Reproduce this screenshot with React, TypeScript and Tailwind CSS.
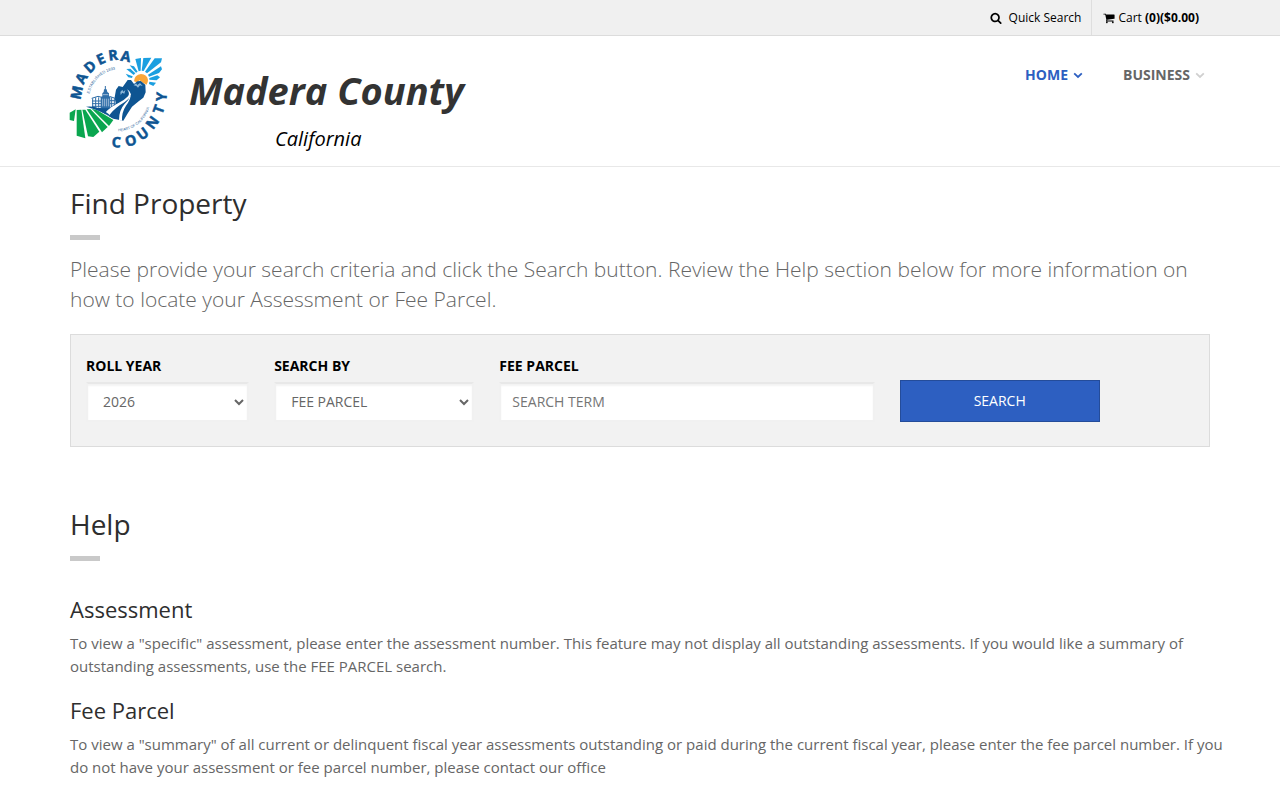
import React from "react";

type Letter = { char: string; x: number; y: number; angle: number };

const topLetters: Letter[] = [
  { char: "M", x: 50, y: 158, angle: -78 },
  { char: "A", x: 64, y: 115, angle: -60 },
  { char: "D", x: 90, y: 80, angle: -42 },
  { char: "E", x: 123, y: 57, angle: -24 },
  { char: "R", x: 159, y: 46, angle: -7 },
  { char: "A", x: 197, y: 49, angle: 10 },
];

const bottomLetters: Letter[] = [
  { char: "C", x: 169, y: 307, angle: 3 },
  { char: "O", x: 212, y: 302, angle: -17 },
  { char: "U", x: 248, y: 281, angle: -36 },
  { char: "N", x: 277, y: 248, angle: -54 },
  { char: "T", x: 296, y: 208, angle: -70 },
  { char: "Y", x: 305, y: 170, angle: -86 },
];

function CountySeal() {
  return (
    <svg viewBox="30 27 300 300" className="size-[100px] shrink-0 overflow-visible" role="img" aria-label="Madera County seal">
      <g
        fill="#0e5592"
        stroke="#0e5592"
        strokeWidth="1.5"
        fontFamily="'Open Sans', sans-serif"
        fontWeight="700"
        fontSize="43"
        textAnchor="middle"
      >
        {[...topLetters, ...bottomLetters].map((l) => (
          <text key={`${l.x}-${l.y}`} transform={`translate(${l.x} ${l.y}) rotate(${l.angle})`} y="15">
            {l.char}
          </text>
        ))}
      </g>
      <g fill="#1b9fe0">
        <path d="M199 87 L211 86 L226 100 L221 105Z" />
        <path d="M209 76 L222 79 L233 95 L228 98Z" />
        <path d="M226 57 L243 54 L242 92 L236 94Z" />
        <path d="M250 54 L274 53 L251 93 L245 92Z" />
        <path d="M284 55 L306 55 L303 67 L261 100 L255 95Z" />
        <path d="M303 79 L306 88 L297 99 L267 110 L264 104Z" />
        <path d="M292 106 L300 112 L290 121 L268 119 L268 114Z" />
        <path d="M268 125 L288 128 L280 138 L267 132Z" />
        <path d="M197 101 L218 109 L216 114 L205 112Z" />
      </g>
      <path d="M222 124 Q223 104 243 102 Q262 103 264 120 Q264 127 260 134 L248 128 L239 121 L230 127Z" fill="#f9a63a" />
      <path
        d="M164 172 L168 149 L176 138 L188 141 L203 120 L213 120 L222 132 L232 124 L242 123 L256 134 L257 157 L250 173 L236 184 L216 200 L202 222 L190 242 L160 236 L125 216 L108 204 L150 203 L167 190Z"
        fill="#0e5592"
      />
      <path
        d="M201 148 Q211 160 204 169 Q193 181 174 190 Q147 203 134 221 L146 229 Q157 212 179 196 Q212 177 213 163 Q211 153 201 148Z"
        fill="#fff"
      />
      <path d="M212 165 Q207 180 193 193 Q177 211 177 240 L186 242 Q185 216 198 197 Q211 181 212 165Z" fill="#fff" />
      <path
        d="M181 156 L187 149 L190 155 L196 150 L193 161 L187 158 L182 165Z M221 136 L228 130 L232 135 L240 129 L248 138 L240 136 L234 143 L229 138Z"
        fill="#8db7d8"
      />
      <g stroke="#2f6ea8" fill="none" strokeWidth="3">
        <path d="M95 175 L114 169 L126 172 M96 183 H126 M96 191 H126 M96 199 H126 M98 175 V202 M107 172 V203 M116 172 V203" />
        <path d="M148 169 L166 175 M148 182 H166 M148 191 H164 M155 172 V201 M163 174 V196" />
        <path d="M136 138 V150" />
      </g>
      <path d="M122 172 L127 169 V160 L131 156 L132 148 H140 L142 156 L147 160 V169 L151 172 V205 H122Z" fill="#2f6ea8" />
      <path d="M129 164 H145 M128 176 V199 M134 176 V199 M140 176 V199 M146 176 V199" stroke="#cfe0ee" strokeWidth="2" />
      <g fill="#0aa64f">
        <path d="M29 218 L47 208 L42 243 L29 240Z" />
        <path d="M50 210 L64 209 L76 295 L50 287Z" />
        <path d="M67 209 L76 209 L118 275 L100 291 L84 289Z" />
        <path d="M80 208 L91 207 L143 261 L126 277Z" />
        <path d="M95 206 L112 211 L160 240 L147 258Z" />
      </g>
      <path d="M78 200 Q105 196 130 211 Q148 222 160 236 Q128 215 98 206Z" fill="#0e5592" />
      <defs>
        <path id="seal-arc-top" d="M89 161 A91 91 0 0 1 180 88" />
        <path id="seal-arc-bottom" d="M175 274 A99 99 0 0 0 270 193" />
      </defs>
      <g fill="#2a659b" fontFamily="'Liberation Sans', sans-serif" fontSize="12">
        <text>
          <textPath href="#seal-arc-top">ESTABLISHED 1893</textPath>
        </text>
        <text fontSize="11">
          <textPath href="#seal-arc-bottom">HEART OF CALIFORNIA</textPath>
        </text>
      </g>
    </svg>
  );
}

function SearchIcon() {
  return (
    <svg viewBox="0 0 1792 1792" className="size-3" fill="currentColor" aria-hidden="true">
      <path d="M1216 832q0-185-131.5-316.5t-316.5-131.5-316.5 131.5-131.5 316.5 131.5 316.5 316.5 131.5 316.5-131.5 131.5-316.5zm512 832q0 52-38 90t-90 38q-54 0-90-38l-343-342q-179 124-399 124-143 0-273.5-55.5t-225-150-150-225-55.5-273.5 55.5-273.5 150-225 225-150 273.5-55.5 273.5 55.5 225 150 150 225 55.5 273.5q0 220-124 399l343 343q37 37 37 90z" />
    </svg>
  );
}

function CartIcon() {
  return (
    <svg viewBox="0 0 1792 1792" className="size-3" fill="currentColor" aria-hidden="true">
      <path d="M704 1536q0 52-38 90t-90 38-90-38-38-90 38-90 90-38 90 38 38 90zm896 0q0 52-38 90t-90 38-90-38-38-90 38-90 90-38 90 38 38 90zm128-1088v512q0 24-16.5 42.5t-40.5 21.5l-1044 122q13 60 13 70 0 16-24 64h920q26 0 45 19t19 45-19 45-45 19h-1024q-26 0-45-19t-19-45q0-11 8-31.5t16-36 21.5-40 15.5-29.5l-177-823h-204q-26 0-45-19t-19-45 19-45 45-19h256q16 0 28.5 6.5t19.5 15.5 13 24.5 8 26 5.5 29.5 4.5 26h1201q26 0 45 19t19 45z" />
    </svg>
  );
}

function Chevron({ className }: { className: string }) {
  return (
    <svg viewBox="0 0 10 10" className={`size-[10px] ${className}`} fill="none" stroke="currentColor" strokeWidth="1.8" aria-hidden="true">
      <path d="M1.2 3.4 L5 7 L8.8 3.4" />
    </svg>
  );
}

function SectionTitle({ children }: { children: React.ReactNode }) {
  return (
    <h2 className="text-[28px] leading-[34px] text-[#2e2e2e] after:mt-[15px] after:block after:h-[5px] after:w-[30px] after:bg-[#c9c9c9] after:content-['']">
      {children}
    </h2>
  );
}

const container = "mx-auto w-full max-w-[1170px] px-[15px]";
const label = "block text-sm leading-5 font-bold text-black";
const field =
  "mt-[6px] block h-10 w-full rounded-none border-2 border-[#f1f1f1] border-t-[#e8e8e8] bg-white bg-clip-padding pb-[2px] text-sm text-[#666] shadow-[inset_0_2px_2px_#f3f3f3] outline-none";

export default function App() {
  return (
    <div className="min-h-screen bg-white font-['Open_Sans',sans-serif] text-[15px] text-[#666]">
      <div className="border-b border-[#dcdcdc] bg-[#f0f0f0]">
        <div className={`${container} flex justify-end text-xs leading-[35px] text-black`}>
          <a href="#quick-search" className="flex items-center gap-[7px] border-r border-[#dedede] pr-[10px]">
            <SearchIcon />
            Quick Search
          </a>
          <a href="#cart" className="flex items-center gap-[3px] px-[11px]">
            <CartIcon />
            <span>
              Cart <b>(0)($0.00)</b>
            </span>
          </a>
        </div>
      </div>

      <header className="border-b border-[#e8e8e8]">
        <div className={`${container} flex items-start justify-between pt-[13px] pb-[17px]`}>
          <div className="flex items-start gap-[19px]">
            <CountySeal />
            <div className="flex flex-col italic">
              <h1 className="mt-3 text-[38px] leading-[58px] font-bold text-[#333]">Madera County</h1>
              <span className="mt-[6px] -mb-4 pl-[86px] text-xl leading-7 text-black">California</span>
            </div>
          </div>
          <nav className="flex gap-10 pt-4 pr-[5px] text-sm leading-5 font-bold">
            <a href="#home" className="flex items-center gap-[5px] text-[#2d5fc1]">
              HOME <Chevron className="text-[#2d5fc1]" />
            </a>
            <a href="#business" className="flex items-center gap-[5px] text-[#666]">
              BUSINESS <Chevron className="text-[#d0d0d0]" />
            </a>
          </nav>
        </div>
      </header>

      <main className={`${container} pt-[19px] pb-5`}>
        <SectionTitle>Find Property</SectionTitle>
        <p className="mt-[14px] text-[21px] leading-[30px] font-light">
          Please provide your search criteria and click the Search button. Review the Help section below for more information on how to
          locate your Assessment or Fee Parcel.
        </p>

        <form
          onSubmit={(e) => e.preventDefault()}
          className="mt-5 grid grid-cols-[163fr_200fr_375fr_294fr] items-end gap-[25px] border border-[#dcdcdc] bg-[#f2f2f2] px-[15px] pt-[21px] pb-6"
        >
          <div>
            <label htmlFor="roll-year" className={label}>
              ROLL YEAR
            </label>
            <select id="roll-year" defaultValue="2026" className={`${field} pl-[11px]`}>
              <option>2026</option>
              <option>2025</option>
            </select>
          </div>
          <div>
            <label htmlFor="search-by" className={label}>
              SEARCH BY
            </label>
            <select id="search-by" defaultValue="FEE PARCEL" className={`${field} pl-[11px]`}>
              <option>FEE PARCEL</option>
              <option>ASSESSMENT</option>
            </select>
          </div>
          <div>
            <label htmlFor="search-term" className={label}>
              FEE PARCEL
            </label>
            <input id="search-term" type="text" placeholder="SEARCH TERM" className={`${field} px-[11px] placeholder:text-[#757575]`} />
          </div>
          <button type="submit" className="h-[42px] w-full max-w-[200px] border border-[#244c9a] bg-[#2d5fc1] text-sm text-white">
            SEARCH
          </button>
        </form>

        <section className="mt-[60px]">
          <SectionTitle>Help</SectionTitle>
          <h3 className="mt-[34px] text-[22px] leading-7 text-[#2e2e2e]">Assessment</h3>
          <p className="-mr-[15px] mt-[9px] leading-[23px]">
            To view a "specific" assessment, please enter the assessment number. This feature may not display all outstanding assessments.
            If you would like a summary of outstanding assessments, use the FEE PARCEL search.
          </p>
          <h3 className="mt-[18px] text-[22px] leading-7 text-[#2e2e2e]">Fee Parcel</h3>
          <p className="-mr-[15px] mt-[9px] leading-[23px]">
            To view a "summary" of all current or delinquent fiscal year assessments outstanding or paid during the current fiscal year,
            please enter the fee parcel number. If you do not have your assessment or fee parcel number, please contact our office
          </p>
        </section>
      </main>
    </div>
  );
}
